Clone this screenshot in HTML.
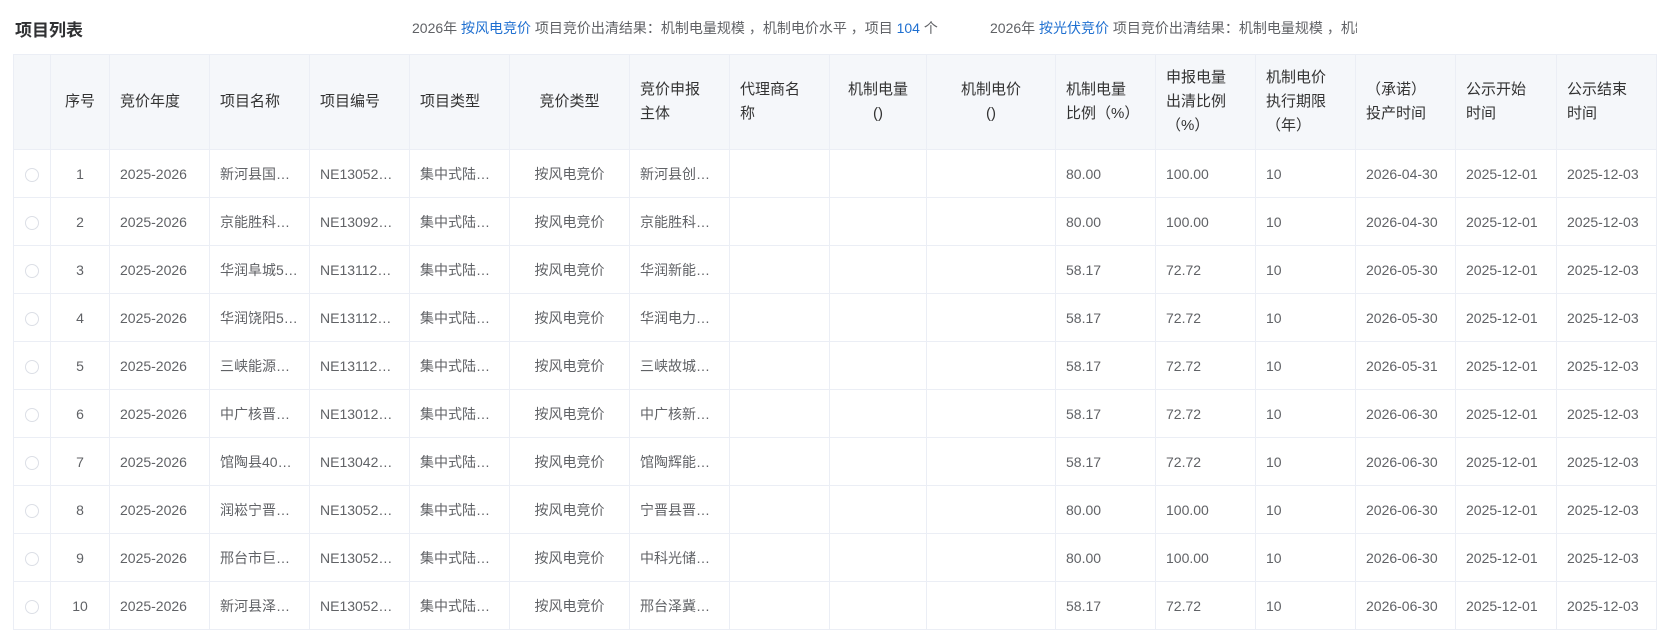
<!DOCTYPE html>
<html><head><meta charset="utf-8"><style>
*{box-sizing:border-box;margin:0;padding:0}
body{width:1665px;height:642px;background:#fff;font-family:"Liberation Sans","Noto Sans CJK SC",sans-serif;color:#606266;position:relative;overflow:hidden}
.title{position:absolute;left:15px;top:16px;font-size:17px;font-weight:bold;color:#303133}
.mq{position:absolute;left:380px;top:16px;width:977px;height:22px;overflow:hidden;font-size:14px;white-space:nowrap;color:#606266}
.mq span.b{color:#1e6fd0}
.mq div{position:absolute;top:2px}
table{position:absolute;left:13px;top:54px;border-collapse:collapse;table-layout:fixed;font-size:14px}
td,th{border:1px solid #ebeef5;padding:0 10px;text-align:left;overflow:hidden;white-space:nowrap;text-overflow:ellipsis}
th{background:#f5f7fa;color:#333;font-weight:normal;font-size:15px;height:95px;line-height:24px;vertical-align:middle;text-overflow:clip}
td{height:48px}
.c{text-align:center}
.r{display:inline-block;width:14px;height:14px;border:1px solid #dcdfe6;border-radius:50%;vertical-align:middle}
td:first-child{padding:0;text-align:center}
</style></head><body>
<div class="title">项目列表</div>
<div class="mq"><div style="left:-3px;color:#999">·</div>
<div style="left:32px">2026年 <span class="b">按风电竞价</span> 项目竞价出清结果：机制电量规模 ，机制电价水平 ，项目 <span class="b">104</span> 个</div>
<div style="left:610px">2026年 <span class="b">按光伏竞价</span> 项目竞价出清结果：机制电量规模 ，机制电价水平</div></div>
<table>
<colgroup><col style="width:37px"><col style="width:59px"><col style="width:100px"><col style="width:100px"><col style="width:100px"><col style="width:100px"><col style="width:120px"><col style="width:100px"><col style="width:100px"><col style="width:97px"><col style="width:129px"><col style="width:100px"><col style="width:100px"><col style="width:100px"><col style="width:100px"><col style="width:101px"><col style="width:100px"></colgroup>
<tr><th></th><th class="c">序号</th><th>竞价年度</th><th>项目名称</th><th>项目编号</th><th>项目类型</th><th class="c">竞价类型</th><th>竞价申报<br>主体</th><th>代理商名<br>称</th><th class="c">机制电量<br>()</th><th class="c">机制电价<br>()</th><th>机制电量<br>比例（%）</th><th>申报电量<br>出清比例<br>（%）</th><th>机制电价<br>执行期限<br>（年）</th><th>（承诺）<br>投产时间</th><th>公示开始<br>时间</th><th>公示结束<br>时间</th></tr>
<tr><td><i class="r"></i></td><td class="c">1</td><td>2025-2026</td><td>新河县国…</td><td>NE13052…</td><td>集中式陆…</td><td class="c">按风电竞价</td><td>新河县创…</td><td></td><td></td><td></td><td>80.00</td><td>100.00</td><td>10</td><td>2026-04-30</td><td>2025-12-01</td><td>2025-12-03</td></tr>
<tr><td><i class="r"></i></td><td class="c">2</td><td>2025-2026</td><td>京能胜科…</td><td>NE13092…</td><td>集中式陆…</td><td class="c">按风电竞价</td><td>京能胜科…</td><td></td><td></td><td></td><td>80.00</td><td>100.00</td><td>10</td><td>2026-04-30</td><td>2025-12-01</td><td>2025-12-03</td></tr>
<tr><td><i class="r"></i></td><td class="c">3</td><td>2025-2026</td><td>华润阜城5…</td><td>NE13112…</td><td>集中式陆…</td><td class="c">按风电竞价</td><td>华润新能…</td><td></td><td></td><td></td><td>58.17</td><td>72.72</td><td>10</td><td>2026-05-30</td><td>2025-12-01</td><td>2025-12-03</td></tr>
<tr><td><i class="r"></i></td><td class="c">4</td><td>2025-2026</td><td>华润饶阳5…</td><td>NE13112…</td><td>集中式陆…</td><td class="c">按风电竞价</td><td>华润电力…</td><td></td><td></td><td></td><td>58.17</td><td>72.72</td><td>10</td><td>2026-05-30</td><td>2025-12-01</td><td>2025-12-03</td></tr>
<tr><td><i class="r"></i></td><td class="c">5</td><td>2025-2026</td><td>三峡能源…</td><td>NE13112…</td><td>集中式陆…</td><td class="c">按风电竞价</td><td>三峡故城…</td><td></td><td></td><td></td><td>58.17</td><td>72.72</td><td>10</td><td>2026-05-31</td><td>2025-12-01</td><td>2025-12-03</td></tr>
<tr><td><i class="r"></i></td><td class="c">6</td><td>2025-2026</td><td>中广核晋…</td><td>NE13012…</td><td>集中式陆…</td><td class="c">按风电竞价</td><td>中广核新…</td><td></td><td></td><td></td><td>58.17</td><td>72.72</td><td>10</td><td>2026-06-30</td><td>2025-12-01</td><td>2025-12-03</td></tr>
<tr><td><i class="r"></i></td><td class="c">7</td><td>2025-2026</td><td>馆陶县40…</td><td>NE13042…</td><td>集中式陆…</td><td class="c">按风电竞价</td><td>馆陶辉能…</td><td></td><td></td><td></td><td>58.17</td><td>72.72</td><td>10</td><td>2026-06-30</td><td>2025-12-01</td><td>2025-12-03</td></tr>
<tr><td><i class="r"></i></td><td class="c">8</td><td>2025-2026</td><td>润崧宁晋…</td><td>NE13052…</td><td>集中式陆…</td><td class="c">按风电竞价</td><td>宁晋县晋…</td><td></td><td></td><td></td><td>80.00</td><td>100.00</td><td>10</td><td>2026-06-30</td><td>2025-12-01</td><td>2025-12-03</td></tr>
<tr><td><i class="r"></i></td><td class="c">9</td><td>2025-2026</td><td>邢台市巨…</td><td>NE13052…</td><td>集中式陆…</td><td class="c">按风电竞价</td><td>中科光储…</td><td></td><td></td><td></td><td>80.00</td><td>100.00</td><td>10</td><td>2026-06-30</td><td>2025-12-01</td><td>2025-12-03</td></tr>
<tr><td><i class="r"></i></td><td class="c">10</td><td>2025-2026</td><td>新河县泽…</td><td>NE13052…</td><td>集中式陆…</td><td class="c">按风电竞价</td><td>邢台泽冀…</td><td></td><td></td><td></td><td>58.17</td><td>72.72</td><td>10</td><td>2026-06-30</td><td>2025-12-01</td><td>2025-12-03</td></tr>
</table>
</body></html>
